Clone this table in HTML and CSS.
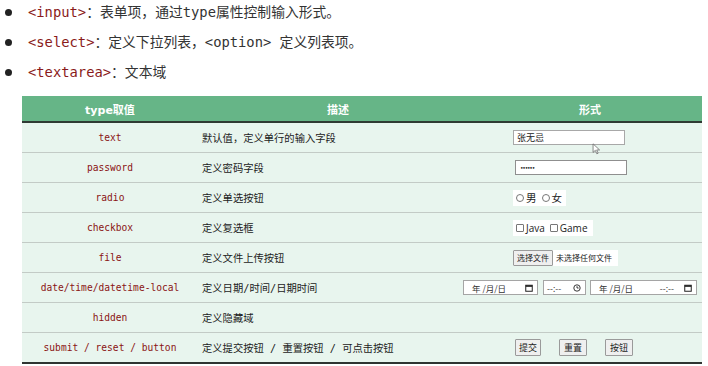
FILE: index.html
```html
<!DOCTYPE html>
<html lang="zh-CN">
<head>
<meta charset="utf-8">
<link rel="stylesheet" href="styles.css">
</head>
<body>
<ul class="list">
  <li><span class="code">&lt;input&gt;</span><span class="desc">：表单项，通过type属性控制输入形式。</span></li>
  <li><span class="code">&lt;select&gt;</span><span class="desc">：定义下拉列表，&lt;option&gt; 定义列表项。</span></li>
  <li><span class="code">&lt;textarea&gt;</span><span class="desc">：文本域</span></li>
</ul>
<div class="table">
  <div class="row head">
    <div class="c1">type取值</div>
    <div class="c2 center">描述</div>
    <div class="c3 center">形式</div>
  </div>
  <div class="row">
    <div class="c1 code">text</div>
    <div class="c2">默认值，定义单行的输入字段</div>
    <div class="c3"><span class="field">张无忌</span></div>
  </div>
  <div class="row">
    <div class="c1 code">password</div>
    <div class="c2">定义密码字段</div>
    <div class="c3"><span class="field pw">••••••</span></div>
  </div>
  <div class="row">
    <div class="c1 code">radio</div>
    <div class="c2">定义单选按钮</div>
    <div class="c3"><span class="chip"><span class="rd"></span>男<span class="rd sp"></span>女</span></div>
  </div>
  <div class="row">
    <div class="c1 code">checkbox</div>
    <div class="c2">定义复选框</div>
    <div class="c3"><span class="chip latin"><span class="cb"></span>Java<span class="cb sp"></span>Game</span></div>
  </div>
  <div class="row">
    <div class="c1 code">file</div>
    <div class="c2">定义文件上传按钮</div>
    <div class="c3"><span class="file"><span class="btn">选择文件</span><span class="fname">未选择任何文件</span></span></div>
  </div>
  <div class="row">
    <div class="c1 code">date/time/datetime-local</div>
    <div class="c2">定义日期/时间/日期时间</div>
    <div class="c3 dates">
      <span class="dt d1">年 /月/日<svg class="ico" viewBox="0 0 8 8"><rect x="0.75" y="1.25" width="6.5" height="6" fill="none" stroke="#222" stroke-width="1"/><rect x="0.75" y="1.25" width="6.5" height="1.6" fill="#222"/></svg></span>
      <span class="dt d2">--:--<svg class="ico" viewBox="0 0 8 8"><circle cx="4" cy="4" r="3.2" fill="none" stroke="#222" stroke-width="0.9"/><path d="M4 2.2V4h1.6" fill="none" stroke="#222" stroke-width="0.9"/></svg></span>
      <span class="dt d3">年 /月/日 <span class="tm">--:--</span><svg class="ico" viewBox="0 0 8 8"><rect x="0.75" y="1.25" width="6.5" height="6" fill="none" stroke="#222" stroke-width="1"/><rect x="0.75" y="1.25" width="6.5" height="1.6" fill="#222"/></svg></span>
    </div>
  </div>
  <div class="row">
    <div class="c1 code">hidden</div>
    <div class="c2">定义隐藏域</div>
    <div class="c3"></div>
  </div>
  <div class="row last">
    <div class="c1 code">submit / reset / button</div>
    <div class="c2">定义提交按钮 / 重置按钮 / 可点击按钮</div>
    <div class="c3 btns"><span class="btn b">提交</span><span class="btn b w">重置</span><span class="btn b w">按钮</span></div>
  </div>
  <svg class="cursor" viewBox="0 0 10 14"><path d="M1 1 L1 11 L3.6 8.6 L5.4 12.6 L6.9 11.9 L5.2 8.1 L8.6 8.1 Z" fill="#fff" stroke="#555" stroke-width="0.8"/></svg>
</div>
</body>
</html>
```

FILE: styles.css
```css
* { box-sizing: border-box; }
body {
  margin: 0;
  background: #fff;
  font-family: "DejaVu Sans Mono", "Noto Sans CJK SC", monospace;
  width: 708px;
  height: 366px;
  overflow: hidden;
}
.list {
  list-style: none;
  margin: 0;
  padding: 2px 0 0 0;
}
.list li {
  position: relative;
  height: 30px;
  line-height: 20px;
  padding-left: 28px;
  font-size: 13.8px;
  color: #333;
  white-space: nowrap;
}
.list li::before {
  content: "";
  position: absolute;
  left: 5px;
  top: 7px;
  width: 7px;
  height: 7px;
  border-radius: 50%;
  background: #222;
}
.list .code { color: #8a1a1a; }
.table {
  position: relative;
  margin: 4px 0 0 22px;
  width: 680px;
  border-bottom: 2px solid #2f3431;
}
.row {
  display: flex;
  height: 30px;
  align-items: center;
  background: #e8f5ee;
  border-bottom: 1px solid #c3cbc6;
  font-size: 10.3px;
  color: #222;
}
.row.last { border-bottom: none; height: 29px; }
.row.head {
  height: 27px;
  background: #66b587;
  color: #fff;
  font-weight: bold;
  font-size: 11px;
  border-bottom: 2px solid #2f3a33;
}
.c1 { width: 176px; text-align: center; flex-shrink: 0; }
.c2 { width: 280px; padding-left: 4px; flex-shrink: 0; }
.c3 { width: 224px; padding-left: 35px; display: flex; align-items: center; flex-shrink: 0; }
.center { text-align: center; padding-left: 0; justify-content: center; }
.row.head .c1 { font-family: "DejaVu Sans", "Noto Sans CJK SC", sans-serif; }
.row.head .c2, .row.head .c3 { font-family: "Noto Sans CJK SC", sans-serif; }
.row .code {
  font-family: "DejaVu Sans Mono", monospace;
  font-size: 9.6px;
  color: #8a1313;
}
.field {
  display: inline-block;
  width: 112px;
  height: 15px;
  background: #fff;
  border: 1px solid #a8a8a8;
  font-family: "Noto Sans CJK SC", sans-serif;
  font-size: 9px;
  line-height: 13px;
  padding-left: 3px;
  color: #222;
}
.field.pw { margin-left: 2px; font-family: "DejaVu Sans", sans-serif; font-size: 6px; letter-spacing: -1.2px; border-color: #8f8f8f; padding-left: 4px; }
.chip {
  display: inline-flex;
  align-items: center;
  background: #fff;
  height: 16px;
  padding: 0 4px 0 3px;
  font-family: "Noto Sans CJK SC", sans-serif;
  font-size: 10.5px;
  color: #222;
}
.chip.latin { font-family: "Open Sans", sans-serif; font-size: 10px; padding-right: 5px; }
.rd {
  display: inline-block;
  width: 8px;
  height: 8px;
  border: 1px solid #777;
  border-radius: 50%;
  margin-right: 2px;
}
.cb {
  display: inline-block;
  width: 8px;
  height: 8px;
  border: 1px solid #777;
  border-radius: 1px;
  margin-right: 2px;
}
.sp { margin-left: 5px; }
.file { display: inline-flex; align-items: center; background: #fff; height: 16px; padding-right: 6px; }
.btn {
  display: inline-block;
  height: 16px;
  line-height: 14px;
  padding: 0 3px;
  border: 1px solid #9a9a9a;
  border-radius: 1px;
  background: #efefef;
  font-family: "Noto Sans CJK SC", sans-serif;
  font-size: 8px;
  color: #222;
}
.fname { font-family: "Noto Sans CJK SC", sans-serif; font-size: 8px; color: #222; margin-left: 3px; }
.dates { padding-left: 0; justify-content: flex-end; padding-right: 5px; gap: 5px; }
.dt {
  flex-shrink: 0;
  display: inline-flex;
  align-items: center;
  justify-content: space-between;
  height: 15px;
  background: #fff;
  border: 1px solid #a5a5a5;
  font-family: "Noto Sans CJK SC", sans-serif;
  font-size: 8.5px;
  color: #333;
  padding: 0 4px 0 8px;
  white-space: nowrap;
}
.d1 { width: 75px; }
.d2 { width: 43px; padding-left: 3px; }
.d3 { width: 107px; margin-left: -1px; }
.tm { margin-left: auto; margin-right: 10px; }
.ico { width: 8px; height: 8px; }
.btns { padding-left: 37px; }
.btns .b { font-size: 9px; height: 17px; line-height: 15px; padding: 0 3px; }
.btns .b.w { padding: 0 4px; }
.btns .b + .b { margin-left: 18px; }
.cursor {
  position: absolute;
  left: 570px;
  top: 47px;
  width: 9px;
  height: 12px;
}
```
